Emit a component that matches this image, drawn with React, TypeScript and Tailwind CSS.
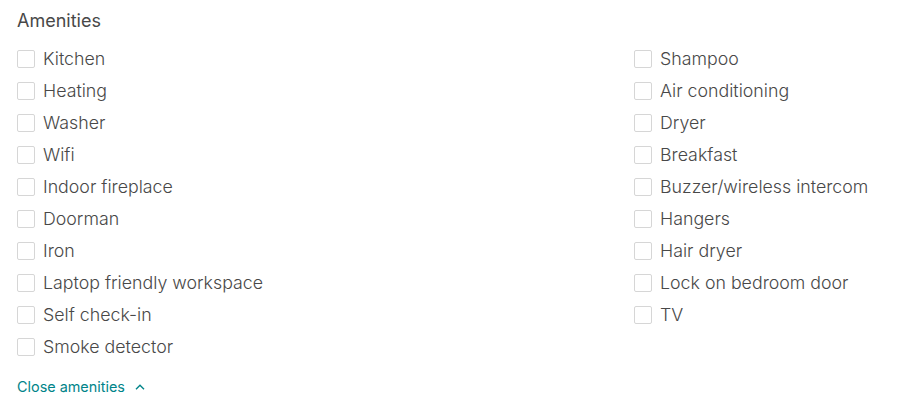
const LEFT = [
  'Kitchen',
  'Heating',
  'Washer',
  'Wifi',
  'Indoor fireplace',
  'Doorman',
  'Iron',
  'Laptop friendly workspace',
  'Self check-in',
  'Smoke detector',
];

const RIGHT = [
  'Shampoo',
  'Air conditioning',
  'Dryer',
  'Breakfast',
  'Buzzer/wireless intercom',
  'Hangers',
  'Hair dryer',
  'Lock on bedroom door',
  'TV',
];

const Amenity = ({ label }: { label: string }) => (
  <label className="flex h-8 items-center">
    <span className="h-[18px] w-[18px] shrink-0 rounded-[2px] border border-[#d6d6d6] bg-white" />
    <span className="ml-[8px] text-[17.8px] leading-none font-light text-[#484848]">{label}</span>
  </label>
);

const App = () => {
  return (
    <div className="h-[410px] w-[898px] bg-white px-[17px] pt-[10px]" style={{ fontFamily: 'Inter, "Open Sans", sans-serif' }}>
      <h3 className="h-[22px] text-[18px] leading-[22px] font-normal text-[#484848]">Amenities</h3>
      <div className="mt-[11px] grid grid-cols-[617px_1fr]">
        <div className="flex flex-col">
          {LEFT.map((item) => (
            <Amenity key={item} label={item} />
          ))}
        </div>
        <div className="flex flex-col">
          {RIGHT.map((item) => (
            <Amenity key={item} label={item} />
          ))}
        </div>
      </div>
      <button type="button" className="mt-[14px] flex items-center gap-[10px] text-[14.4px] leading-[20px] text-[#008489]">
        Close amenities
        <svg width="10" height="6" viewBox="0 0 10 6" fill="none" stroke="currentColor" strokeWidth="1.4">
          <path d="M1 5.2 L5 1.2 L9 5.2" />
        </svg>
      </button>
    </div>
  );
};

export default App;
